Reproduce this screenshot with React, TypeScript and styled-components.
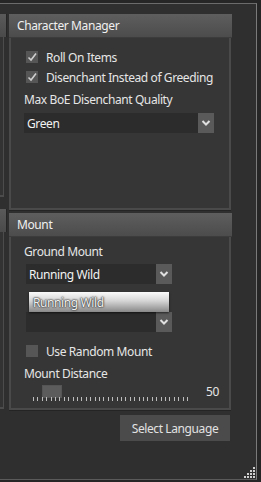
import React from "react";
import styled, { createGlobalStyle } from "styled-components";

const GlobalStyle = createGlobalStyle`
  html, body {
    margin: 0;
    padding: 0;
    background: #2e2e2e;
  }
  body {
    font-family: "Noto Sans", "Open Sans", sans-serif;
    font-size: 12px;
    letter-spacing: -0.4px;
    color: #e6e6e6;
  }
`;

const Window = styled.div`
  width: 261px;
  height: 482px;
  background: #262626;
  padding-top: 3px;
  box-sizing: border-box;
  overflow: hidden;
`;

const Frame = styled.div`
  position: relative;
  width: 257px;
  height: 477px;
  box-sizing: border-box;
  background: #2f2f2f;
  border-top: 1px solid #6b6b6b;
  border-right: 1px solid #7a7a7a;
  border-bottom: 1px solid #5a5a5a;
  padding-top: 10px;
`;

const Columns = styled.div`
  display: flex;
  gap: 2px;
`;

const StubColumn = styled.div`
  width: 7px;
  display: flex;
  flex-direction: column;
  gap: 12px;
`;

const MainColumn = styled.div`
  width: 223px;
  display: flex;
  flex-direction: column;
  gap: 3px;
`;

const Panel = styled.div<{ $h: number }>`
  height: ${({ $h }) => $h}px;
  display: flex;
  flex-direction: column;
`;

const Header = styled.div`
  height: 23px;
  flex: none;
  background: linear-gradient(#5e5e5e, #4c4c4c);
  border-bottom: 1px solid #3c3c3c;
  display: flex;
  align-items: center;
  padding-left: 8px;
  color: #f0f0f0;
`;

const StubHeader = styled.div`
  height: 23px;
  flex: none;
  background: linear-gradient(#5a5a5a, #4a4a4a);
  border-right: 1px solid #262626;
`;

const StubBody = styled.div`
  flex: 1;
  width: 3px;
  border-right: 1px solid #4c4c4c;
  border-bottom: 2px solid #4c4c4c;
  background: #333;
`;

const Body = styled.div<{ $pt: number }>`
  flex: 1;
  background: #363636;
  border: 2px solid #4a4a4a;
  border-top: none;
  margin-right: 1px;
  box-shadow: 0 1px 0 #242424;
  padding: ${({ $pt }) => $pt}px 0 0 13px;
  display: flex;
  flex-direction: column;
  position: relative;
`;

const CheckRow = styled.div<{ $mt?: number }>`
  height: 20px;
  margin-top: ${({ $mt }) => $mt ?? 0}px;
  margin-left: 2px;
  display: flex;
  align-items: center;
  gap: 8px;
`;

const Box = styled.div`
  width: 12px;
  height: 12px;
  background: #565656;
  display: flex;
  align-items: center;
  justify-content: center;
`;

const Label = styled.div<{ $mt?: number }>`
  height: 20px;
  margin-top: ${({ $mt }) => $mt ?? 0}px;
  display: flex;
  align-items: center;
`;

const Combo = styled.div<{ $w: number; $mt?: number; $ml?: number }>`
  position: relative;
  width: ${({ $w }) => $w}px;
  height: 20px;
  margin-top: ${({ $mt }) => $mt ?? 0}px;
  margin-left: ${({ $ml }) => $ml ?? 0}px;
  background: #2c2c2c;
  display: flex;
  align-items: center;
  padding-left: 3px;
  box-sizing: border-box;
`;

const ComboText = styled.span`
  flex: 1;
  color: #f2f2f2;
`;

const ArrowBtn = styled.div`
  width: 16px;
  height: 20px;
  background: #5a5a5a;
  display: flex;
  align-items: center;
  justify-content: center;
`;

const Popup = styled.div`
  position: absolute;
  left: 3px;
  top: 28px;
  width: 140px;
  height: 20px;
  background: linear-gradient(#fafafa, #d4d4d4 45%, #888);
  box-shadow: 0 1px 2px rgba(0, 0, 0, 0.6);
  display: flex;
  align-items: center;
  padding-left: 4px;
  box-sizing: border-box;
  color: #f0f0f0;
  text-shadow: 0 0 1px #333, 0 0 2px #444, 0 0 2px #444;
  z-index: 2;
`;

const SliderRow = styled.div`
  margin-top: 2px;
  display: flex;
  align-items: center;
`;

const Slider = styled.div`
  position: relative;
  width: 158px;
  height: 17px;
  margin-left: 9px;
`;

const Thumb = styled.div`
  position: absolute;
  left: 9px;
  top: 0;
  width: 18px;
  height: 11px;
  background: #5c5c5c;
  border: 1px solid #555;
`;

const Ticks = styled.div`
  position: absolute;
  left: 0;
  right: 0;
  bottom: 1px;
  height: 4px;
  background: repeating-linear-gradient(
    to right,
    #bdbdbd 0,
    #bdbdbd 1px,
    transparent 1px,
    transparent 4.4px
  );
`;

const Value = styled.div`
  margin-left: 15px;
  margin-top: -4px;
`;

const Footer = styled.div`
  margin-top: 2px;
  display: flex;
  justify-content: flex-end;
  padding-right: 2px;
`;

const Button = styled.div`
  width: 110px;
  height: 26px;
  background: #4b4b4b;
  display: flex;
  align-items: center;
  justify-content: center;
  color: #e2e2e2;
`;

const Grip = styled.svg`
  position: absolute;
  right: 1px;
  bottom: 1px;
`;

const Chevron = () => (
  <svg width="10" height="8" viewBox="0 0 10 8">
    <path d="M1.5 2 L5 5.5 L8.5 2" stroke="#e0e0e0" strokeWidth="2" fill="none" />
  </svg>
);

const Check = () => (
  <svg width="12" height="12" viewBox="0 0 12 12">
    <path d="M2.5 6.5 L5 9 L10 2.5" stroke="#cfcfcf" strokeWidth="1.6" fill="none" />
  </svg>
);

const gripDots: [number, number][] = [];
for (let r = 0; r < 4; r++) {
  for (let c = 3 - r; c < 4; c++) gripDots.push([c * 3, r * 3]);
}

export default function App() {
  return (
    <>
      <GlobalStyle />
      <Window>
        <Frame>
          <Columns>
            <StubColumn>
              <Panel $h={183}>
                <StubHeader />
                <StubBody />
              </Panel>
              <Panel $h={200}>
                <StubHeader />
                <StubBody />
              </Panel>
            </StubColumn>
            <MainColumn>
              <Panel $h={196}>
                <Header>Character Manager</Header>
                <Body $pt={9}>
                  <CheckRow>
                    <Box>
                      <Check />
                    </Box>
                    Roll On Items
                  </CheckRow>
                  <CheckRow>
                    <Box>
                      <Check />
                    </Box>
                    Disenchant Instead of Greeding
                  </CheckRow>
                  <Label $mt={2}>Max BoE Disenchant Quality</Label>
                  <Combo $w={190} $mt={4}>
                    <ComboText>Green</ComboText>
                    <ArrowBtn>
                      <Chevron />
                    </ArrowBtn>
                  </Combo>
                </Body>
              </Panel>
              <Panel $h={197}>
                <Header>Mount</Header>
                <Body $pt={4}>
                  <Label>Ground Mount</Label>
                  <Combo $w={146} $mt={3} $ml={2}>
                    <ComboText>Running Wild</ComboText>
                    <ArrowBtn>
                      <Chevron />
                    </ArrowBtn>
                    <Popup>Running Wild</Popup>
                  </Combo>
                  <Combo $w={146} $mt={28} $ml={2}>
                    <ComboText />
                    <ArrowBtn>
                      <Chevron />
                    </ArrowBtn>
                  </Combo>
                  <CheckRow $mt={9}>
                    <Box />
                    Use Random Mount
                  </CheckRow>
                  <Label $mt={2}>Mount Distance</Label>
                  <SliderRow>
                    <Slider>
                      <Thumb />
                      <Ticks />
                    </Slider>
                    <Value>50</Value>
                  </SliderRow>
                </Body>
              </Panel>
              <Footer>
                <Button>Select Language</Button>
              </Footer>
            </MainColumn>
          </Columns>
          <Grip width="11" height="11" viewBox="0 0 11 11">
            {gripDots.map(([x, y]) => (
              <rect key={`${x}-${y}`} x={x} y={y} width="2" height="2" fill="#d0d0d0" />
            ))}
          </Grip>
        </Frame>
      </Window>
    </>
  );
}
